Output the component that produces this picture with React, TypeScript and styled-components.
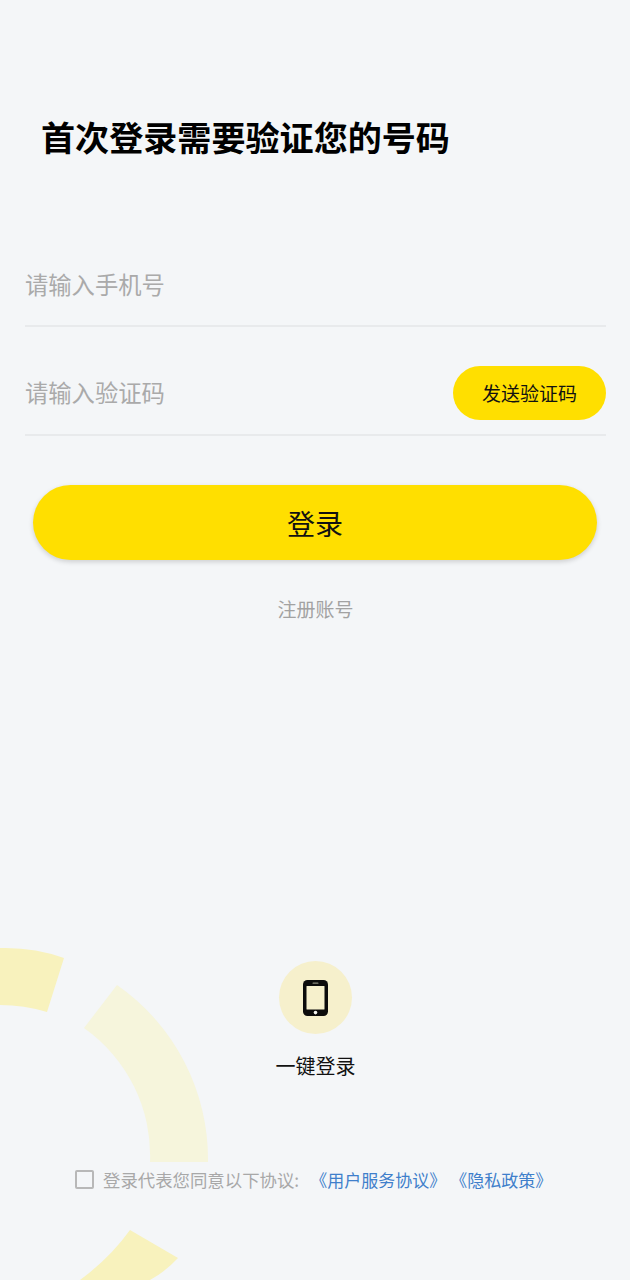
import React from "react";
import styled, { createGlobalStyle } from "styled-components";

const GlobalStyle = createGlobalStyle`
  html, body { margin: 0; padding: 0; background: #f4f6f8; }
  * { box-sizing: border-box; }
`;

const Page = styled.div`
  position: relative;
  width: 630px;
  height: 1280px;
  overflow: hidden;
  background: #f4f6f8;
  font-family: "Noto Sans CJK SC", "Noto Sans", sans-serif;
  display: flex;
  flex-direction: column;
`;

const Backdrop = styled.svg`
  position: absolute;
  left: 0;
  top: 930px;
  width: 300px;
  height: 350px;
`;

const Content = styled.div`
  position: relative;
  display: flex;
  flex-direction: column;
  padding: 0 24px 0 25px;
  height: 100%;
`;

const Title = styled.h1`
  margin: 111px 0 0 16px;
  font-size: 34.1px;
  line-height: 50px;
  font-weight: 700;
  color: #000;
`;

const Field = styled.div`
  display: flex;
  align-items: center;
  justify-content: space-between;
  height: 109px;
  padding-top: 22px;
  border-bottom: 2px solid #e8eaec;
`;

const FirstField = styled(Field)`
  margin-top: 57px;
  padding-top: 24px;
`;

const Placeholder = styled.span`
  font-size: 23.3px;
  line-height: 34px;
  color: #aaaaaa;
`;

const SendButton = styled.button`
  width: 153px;
  height: 54px;
  margin-top: 2px;
  border: 0;
  padding: 0;
  border-radius: 27px;
  background: #ffdf00;
  color: #111;
  font: inherit;
  font-size: 19px;
`;

const LoginButton = styled.button`
  align-self: flex-start;
  width: 564px;
  height: 75px;
  margin: 49px 0 0 8px;
  border: 0;
  padding: 0;
  border-radius: 38px;
  background: #ffdf00;
  box-shadow: 0 2px 5px rgba(0, 0, 0, 0.16);
  color: #111;
  font: inherit;
  font-size: 28px;
`;

const RegisterLink = styled.div`
  margin-top: 35px;
  text-align: center;
  font-size: 19px;
  line-height: 28px;
  color: #a2a2a2;
`;

const QuickLogin = styled.div`
  display: flex;
  flex-direction: column;
  align-items: center;
  margin-top: 338px;
`;

const PhoneBadge = styled.div`
  width: 73px;
  height: 73px;
  border-radius: 50%;
  background: #f6f0cc;
  display: flex;
  align-items: center;
  justify-content: center;
`;

const QuickLabel = styled.div`
  margin-top: 17px;
  font-size: 20px;
  line-height: 30px;
  color: #111;
`;

const Agreement = styled.div`
  display: flex;
  align-items: center;
  margin: 83px 0 0 50px;
  height: 30px;
  font-size: 17.4px;
  white-space: nowrap;
`;

const CheckBox = styled.span`
  width: 19px;
  height: 19px;
  margin-right: 9px;
  border: 2px solid #b8b8b8;
  border-radius: 2px;
`;

const AgreementText = styled.span`
  color: #a8a8a8;
  margin-right: 11px;
`;

const PolicyLink = styled.span`
  color: #3f7fcb;
  font-size: 17px;
  & + & {
    margin-left: 4px;
  }
`;

const PhoneIcon = () => (
  <svg width="25" height="36" viewBox="0 0 25 36" aria-hidden="true">
    <rect width="25" height="36" rx="4.5" fill="#0c0c0c" />
    <rect x="3.5" y="6" width="18" height="23.5" rx="0.5" fill="#f6f0cc" />
    <rect x="9.5" y="2.6" width="6" height="1.2" rx="0.6" fill="#8a8a7c" />
    <circle cx="12.5" cy="32.6" r="1.8" fill="#f4f4f0" />
  </svg>
);

// Three segments of one ring, centred just off the page's left edge
const RingArcs = () => (
  <Backdrop viewBox="0 0 300 350" aria-hidden="true">
    <path d="M0 18 Q34 17 64 28 L47 82 Q24 75 0 75 Z" fill="#f8f2bd" />
    <path d="M117 55 A212 212 0 0 1 208 232 L150 232 A156 156 0 0 0 84 98 Z" fill="#f6f5dc" />
    <path d="M130 300 L178 328 Q165 342 150 350 L80 350 Q110 328 130 300 Z" fill="#f8f2bd" />
  </Backdrop>
);

export default function App() {
  return (
    <Page>
      <GlobalStyle />
      <RingArcs />
      <Content>
        <Title>首次登录需要验证您的号码</Title>
        <FirstField>
          <Placeholder>请输入手机号</Placeholder>
        </FirstField>
        <Field>
          <Placeholder>请输入验证码</Placeholder>
          <SendButton>发送验证码</SendButton>
        </Field>
        <LoginButton>登录</LoginButton>
        <RegisterLink>注册账号</RegisterLink>
        <QuickLogin>
          <PhoneBadge>
            <PhoneIcon />
          </PhoneBadge>
          <QuickLabel>一键登录</QuickLabel>
        </QuickLogin>
        <Agreement>
          <CheckBox />
          <AgreementText>登录代表您同意以下协议:</AgreementText>
          <PolicyLink>《用户服务协议》</PolicyLink>
          <PolicyLink>《隐私政策》</PolicyLink>
        </Agreement>
      </Content>
    </Page>
  );
}
